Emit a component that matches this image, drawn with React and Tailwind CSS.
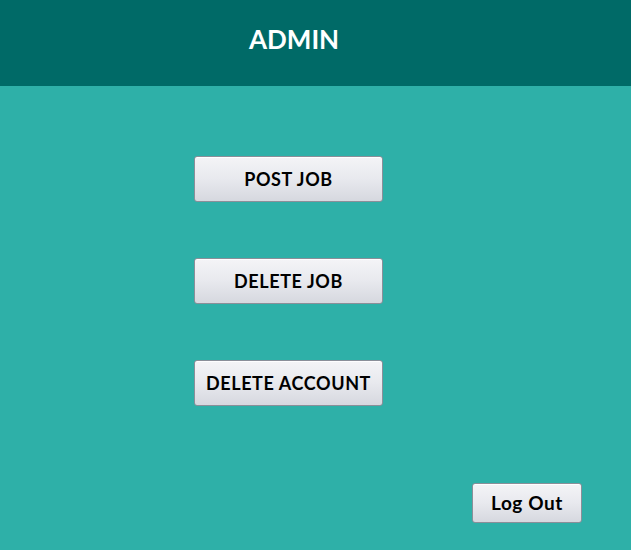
const buttonClass =
  "flex items-center justify-center rounded-[3px] border border-[#8a8f99] bg-gradient-to-b from-[#f4f4f7] via-[#e8e9ee] to-[#d6d8df] text-black font-bold tracking-[0.6px] shadow-[inset_0_1px_0_rgba(255,255,255,0.9)]";

const App = () => {
  const actions = ["POST JOB", "DELETE JOB", "DELETE ACCOUNT"];

  return (
    <div
      className="w-[631px] h-[550px] flex flex-col bg-[#2eb0a8]"
      style={{ fontFamily: "Lato, 'Open Sans', sans-serif" }}
    >
      {/* Header */}
      <div className="h-[86px] bg-[#006a67] flex items-start pt-[26px] pl-[249px]">
        <h1 className="text-white font-bold text-[26px] leading-none">
          ADMIN
        </h1>
      </div>

      {/* Actions */}
      <div className="flex flex-col gap-[56px] pt-[70px] pl-[194px]">
        {actions.map((label, i) => (
          <button
            key={label}
            className={`${buttonClass} w-[189px] h-[46px] text-[18px] ${
              i === 0 ? "border-[#7c8aa3]" : ""
            }`}
          >
            {label}
          </button>
        ))}
      </div>

      {/* Log out */}
      <div className="flex justify-end pr-[49px] pt-[77px]">
        <button className={`${buttonClass} w-[110px] h-[40px] text-[19px]`}>
          Log Out
        </button>
      </div>
    </div>
  );
};

export default App;
